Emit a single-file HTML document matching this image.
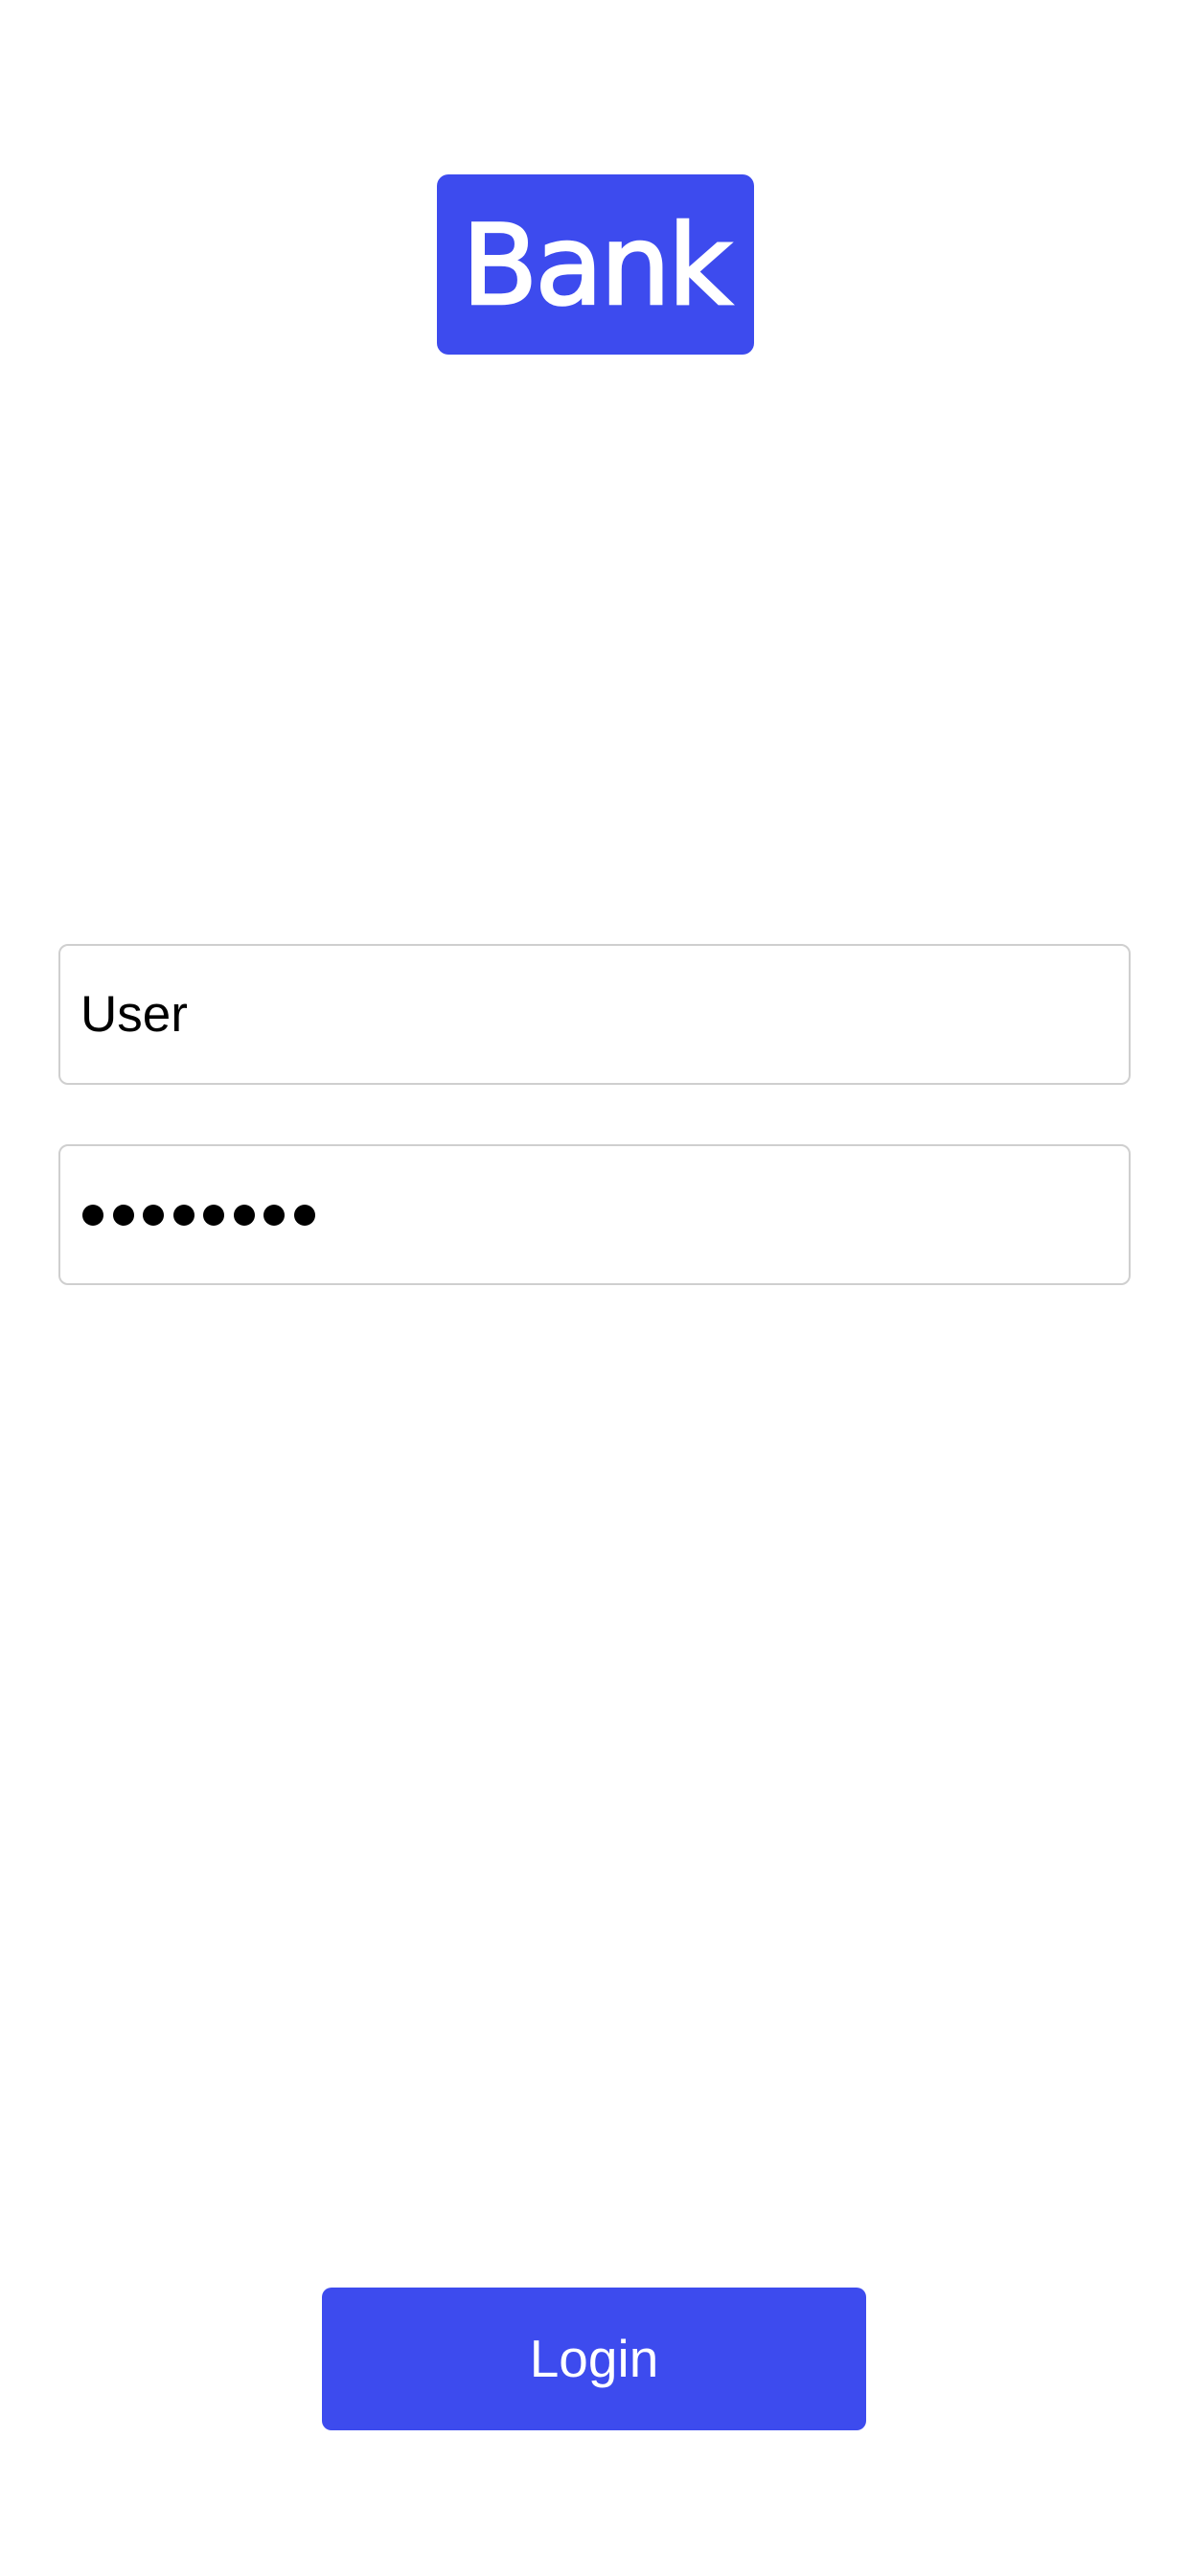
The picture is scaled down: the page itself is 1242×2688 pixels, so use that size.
<!DOCTYPE html>
<html><head><meta charset="utf-8"><style>
html,body{margin:0;padding:0;background:#fff;}
body{width:1242px;height:2688px;position:relative;overflow:hidden;font-family:"Liberation Sans",sans-serif;}
.logo{position:absolute;left:456px;top:182px;width:331px;height:188px;background:#3d4bee;border-radius:12px;display:flex;align-items:center;justify-content:center;}
.logo span{color:#fff;font-size:116px;line-height:1;font-family:"DejaVu Sans","Liberation Sans",sans-serif;letter-spacing:-3px;margin-top:4px;-webkit-text-stroke:2.5px #fff;}
.inp{position:absolute;left:61px;width:1119px;height:147px;border:2.5px solid #cfcfcf;border-radius:10px;box-sizing:border-box;display:flex;align-items:center;}
.inp span{margin-left:21px;font-size:53px;line-height:1;color:#000;}
.dots{margin-left:23px;display:flex;}
.dots i{display:block;width:22px;height:22px;border-radius:50%;background:#000;margin-right:9.5px;}
.btn{position:absolute;left:336px;top:2387px;width:568px;height:149px;background:#3d4bee;border-radius:10px;display:flex;align-items:center;justify-content:center;}
.btn span{color:#fff;font-size:55px;line-height:1;}
</style></head><body>
<div class="logo"><span>Bank</span></div>
<div class="inp" style="top:985px"><span>User</span></div>
<div class="inp" style="top:1194px"><div class="dots"><i></i><i></i><i></i><i></i><i></i><i></i><i></i><i></i></div></div>
<div class="btn"><span>Login</span></div>
</body></html>
